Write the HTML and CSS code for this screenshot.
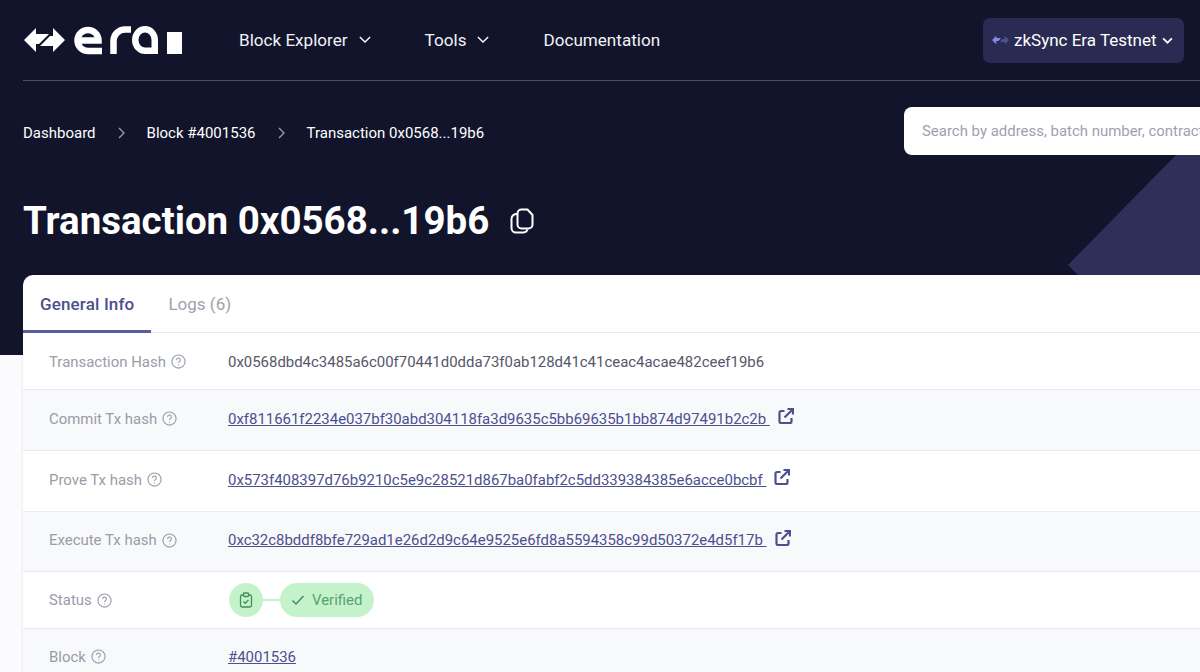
FILE: index.html
```html
<!DOCTYPE html>
<html lang="en">
<head>
<meta charset="utf-8">
<title>Transaction 0x0568...19b6</title>
<link rel="stylesheet" href="styles.css">
</head>
<body>
<div class="page">
  <header class="hero">
    <svg class="hero-shape" viewBox="0 0 132 120" aria-hidden="true"><polygon points="0,110 108,0 132,0 132,120 10,120"/></svg>
    <nav class="topbar">
      <svg class="logo" viewBox="23 25 160 30" role="img" aria-label="era logo">
        <path class="logo-fill" d="M24 40 36 28V34H49L39 44H36V52Z M65 40 53 52V46H40L50 36H53V28Z"/>
        <g class="logo-stroke">
          <path d="M77 40.500H98.500A10.500 10.500 0 1 0 88 51H102"/>
          <path d="M113.500 54V41A11.500 11.500 0 0 1 125 29.500H131"/>
          <path d="M154.750 54V40A9.750 10.750 0 1 0 145 50.750H155"/>
        </g>
        <rect class="logo-fill" x="167" y="32" width="15" height="22"/>
      </svg>
      <ul class="menu">
        <li class="menu-item">Block Explorer <svg class="chev" viewBox="0 0 14 8"><path d="M1 1l6 6 6-6"/></svg></li>
        <li class="menu-item">Tools <svg class="chev" viewBox="0 0 14 8"><path d="M1 1l6 6 6-6"/></svg></li>
        <li class="menu-item">Documentation</li>
      </ul>
      <div class="network">
        <svg class="net-logo" viewBox="0 0 18 10"><path class="net-a" d="M0 5 4.500 .5V3H9.500L7 6H4.500V9.500Z"/><path class="net-b" d="M18 5 13.500 9.500V7H8.500L11 4H13.500V.5Z"/></svg>
        <span>zkSync Era Testnet</span>
        <svg class="chev-bold" viewBox="0 0 12 8"><path d="M1 1.500l5 5 5-5"/></svg>
      </div>
    </nav>
    <div class="crumbrow">
      <ol class="crumbs">
        <li>Dashboard</li>
        <li class="sep"><svg viewBox="0 0 7 12"><path d="M1 1l5 5-5 5"/></svg></li>
        <li>Block #4001536</li>
        <li class="sep"><svg viewBox="0 0 7 12"><path d="M1 1l5 5-5 5"/></svg></li>
        <li>Transaction 0x0568...19b6</li>
      </ol>
      <div class="search">Search by address, batch number, contract</div>
    </div>
    <div class="titlerow">
      <h1>Transaction 0x0568...19b6</h1>
      <svg class="copy" viewBox="0 0 24 26"><path d="M11.500 1.500h6l5 5.500v9.500a4 4 0 0 1-4 4h-7a4 4 0 0 1-4-4v-11a4 4 0 0 1 4-4Z"/><path d="M7 6A5 5 0 0 0 1.500 10.500v9.500a4.500 4.500 0 0 0 4.500 4.500h7.500a4.500 4.500 0 0 0 4-3"/></svg>
    </div>
  </header>

  <main class="card">
    <div class="tabs">
      <div class="tab active">General Info</div>
      <div class="tab tab-logs">Logs (6)</div>
    </div>
    <div class="row row-hash">
      <div class="label">Transaction Hash<svg class="help" viewBox="0 0 16 16"><circle cx="8" cy="8" r="7"/><path d="M6 6.300a2 2 0 1 1 3.100 1.700C8.300 8.500 8 8.900 8 9.700"/><path d="M8 11.300v.9"/></svg></div>
      <div class="value">0x0568dbd4c3485a6c00f70441d0dda73f0ab128d41c41ceac4acae482ceef19b6</div>
    </div>
    <div class="row row-alt row-link">
      <div class="label">Commit Tx hash<svg class="help" viewBox="0 0 16 16"><circle cx="8" cy="8" r="7"/><path d="M6 6.300a2 2 0 1 1 3.100 1.700C8.300 8.500 8 8.900 8 9.700"/><path d="M8 11.300v.9"/></svg></div>
      <div class="value"><a class="link">0xf811661f2234e037bf30abd304118fa3d9635c5bb69635b1bb874d97491b2c2b&nbsp;</a><svg class="ext" viewBox="0 0 16 16"><path d="M6.500 3H3A1.500 1.500 0 0 0 1.500 4.500v9A1.500 1.500 0 0 0 3 15h9a1.500 1.500 0 0 0 1.500-1.500V10"/><path d="M6.500 9.500 15 1M9.500 1H15V6.500"/></svg></div>
    </div>
    <div class="row row-link">
      <div class="label">Prove Tx hash<svg class="help" viewBox="0 0 16 16"><circle cx="8" cy="8" r="7"/><path d="M6 6.300a2 2 0 1 1 3.100 1.700C8.300 8.500 8 8.900 8 9.700"/><path d="M8 11.300v.9"/></svg></div>
      <div class="value"><a class="link">0x573f408397d76b9210c5e9c28521d867ba0fabf2c5dd339384385e6acce0bcbf&nbsp;</a><svg class="ext" viewBox="0 0 16 16"><path d="M6.500 3H3A1.500 1.500 0 0 0 1.500 4.500v9A1.500 1.500 0 0 0 3 15h9a1.500 1.500 0 0 0 1.500-1.500V10"/><path d="M6.500 9.500 15 1M9.500 1H15V6.500"/></svg></div>
    </div>
    <div class="row row-alt row-link row-short">
      <div class="label">Execute Tx hash<svg class="help" viewBox="0 0 16 16"><circle cx="8" cy="8" r="7"/><path d="M6 6.300a2 2 0 1 1 3.100 1.700C8.300 8.500 8 8.900 8 9.700"/><path d="M8 11.300v.9"/></svg></div>
      <div class="value"><a class="link">0xc32c8bddf8bfe729ad1e26d2d9c64e9525e6fd8a5594358c99d50372e4d5f17b&nbsp;</a><svg class="ext" viewBox="0 0 16 16"><path d="M6.500 3H3A1.500 1.500 0 0 0 1.500 4.500v9A1.500 1.500 0 0 0 3 15h9a1.500 1.500 0 0 0 1.500-1.500V10"/><path d="M6.500 9.500 15 1M9.500 1H15V6.500"/></svg></div>
    </div>
    <div class="row">
      <div class="label">Status<svg class="help" viewBox="0 0 16 16"><circle cx="8" cy="8" r="7"/><path d="M6 6.300a2 2 0 1 1 3.100 1.700C8.300 8.500 8 8.900 8 9.700"/><path d="M8 11.300v.9"/></svg></div>
      <div class="value status">
        <span class="status-dot"><svg viewBox="0 0 16 16"><rect x="2.500" y="3" width="11" height="12" rx="1.800"/><rect x="5.500" y="1" width="5" height="3.500" rx=".8"/><path d="M5.500 9.500l1.800 1.800 3.200-3.400"/></svg></span>
        <span class="status-line"></span>
        <span class="status-pill"><svg viewBox="0 0 14 12"><path d="M1.500 6.500 5 10l7.500-8"/></svg>Verified</span>
      </div>
    </div>
    <div class="row row-alt row-last">
      <div class="label">Block<svg class="help" viewBox="0 0 16 16"><circle cx="8" cy="8" r="7"/><path d="M6 6.300a2 2 0 1 1 3.100 1.700C8.300 8.500 8 8.900 8 9.700"/><path d="M8 11.300v.9"/></svg></div>
      <div class="value"><a class="link">#4001536</a></div>
    </div>
  </main>
</div>
</body>
</html>
```
FILE: styles.css
```css
* { box-sizing: border-box; }
html, body { margin: 0; height: 100%; }
body { background: #fbfbfd; font-family: Roboto, "Liberation Sans", sans-serif; overflow: hidden; }
.page { width: 1200px; height: 672px; overflow: hidden; }

.hero { position: relative; height: 355px; background: #11142b; padding: 0 0 0 23px; color: #fff; overflow: hidden; }
.hero-shape { position: absolute; left: 1068px; top: 155px; width: 132px; height: 120px; }
.hero-shape polygon { fill: #2f3059; }

.topbar { display: flex; align-items: center; height: 81px; border-bottom: 1px solid #4c4e63; padding-right: 16px; }
.logo { width: 160px; height: 30px; flex: none; }
.logo-fill { fill: #fff; }
.logo-stroke path { fill: none; stroke: #fff; stroke-width: 6.500; }
.menu { display: flex; list-style: none; margin: 0 0 0 56px; padding: 0 0 1px; font-size: 17.100px; color: #f2f2f5; }
.menu-item { display: flex; align-items: center; margin-right: 54px; }
.chev { width: 12px; height: 7px; margin-left: 11px; }
.chev path { fill: none; stroke: #fff; stroke-width: 1.500; }
.network { display: flex; align-items: center; width: 201px; height: 45px; margin-left: auto; padding-left: 9px; border-radius: 7px; background: #2a2b52; font-size: 17px; }
.net-logo { width: 17px; height: 10px; margin-right: 5px; }
.net-a { fill: #8a84ec; }
.net-b { fill: #4f4f96; }
.chev-bold { width: 11px; height: 7px; margin-left: 5px; }
.chev-bold path { fill: none; stroke: #fff; stroke-width: 2; }

.crumbrow { display: flex; align-items: flex-start; justify-content: space-between; }
.crumbs { display: flex; align-items: center; list-style: none; margin: 41px 0 0; padding: 1px 0 0; font-size: 15px; line-height: 20px; color: #fff; }
.sep { display: flex; margin: 0 22px; }
.sep svg { width: 7px; height: 12px; }
.sep path { fill: none; stroke: #a4a5b2; stroke-width: 1.200; }
.search { flex: none; width: 296px; height: 48px; margin-top: 26px; padding-left: 18px; border-radius: 8px 0 0 8px; background: #fff; color: #9fa1ad; font-size: 14.950px; line-height: 49px; white-space: nowrap; overflow: hidden; }

.titlerow { display: flex; align-items: center; margin-top: 42px; }
h1 { margin: 0; font-size: 38.500px; line-height: 48px; font-weight: 700; color: #fff; }
.copy { width: 24px; height: 26px; margin-left: 21px; }
.copy path { fill: none; stroke: #fff; stroke-width: 2; }

.card { margin: -80px 0 0 23px; background: #fff; border-radius: 10px 0 0 0; box-shadow: 0 0 3px rgba(20, 24, 50, .12); position: relative; height: 400px; overflow: hidden; }
.tabs { display: flex; height: 58px; border-bottom: 1px solid #e9eaef; }
.tab { padding: 0 17px; font-size: 17px; line-height: 58px; color: #9fa1ad; }
.tab.active { height: 58px; padding-right: 17px; border-bottom: 3px solid #5b5c9d; font-weight: 500; letter-spacing: .15px; color: #4d4f8e; }
.tab-logs { padding-left: 17px; }

.row { display: flex; align-items: center; height: 57px; border-bottom: 1px solid #e9eaef; padding-left: 26px; font-size: 14.950px; }
.row-hash { padding-top: 1px; }
.row-link { height: 61px; padding-bottom: 3px; }
.row-short { height: 60px; }
.row-alt { background: #f8f9fb; }
.row-last { border-bottom: 0; padding-bottom: 2px; }
.label { display: flex; align-items: center; width: 179px; flex: none; color: #9a9ca8; }
.help { width: 15px; height: 15px; margin-left: 5px; }
.help circle, .help path { fill: none; stroke: #9a9ca8; stroke-width: 1.200; }
.value { display: flex; align-items: center; color: #55576a; white-space: nowrap; }
.link { color: #4d4f8e; text-decoration: underline; }
.ext { width: 16px; height: 16px; margin: -5px 0 0 8px; }
.ext path { fill: none; stroke: #4d4f8e; stroke-width: 2.200; }

.status-dot { display: flex; align-items: center; justify-content: center; width: 34px; height: 34px; margin-left: 1px; border-radius: 50%; background: #c4f3cb; }
.status-dot svg { width: 16px; height: 16px; }
.status-dot rect { fill: #c4f3cb; stroke: #3f8f5b; stroke-width: 1.300; }
.status-dot path { fill: none; stroke: #3f8f5b; stroke-width: 1.300; }
.status-line { width: 17px; height: 2px; background: #c4f3cb; }
.status-pill { display: flex; align-items: center; height: 34px; padding: 0 12px 0 11px; border-radius: 17px; background: #c4f3cb; color: #58a172; }
.status-pill svg { width: 14px; height: 12px; margin-right: 7px; }
.status-pill path { fill: none; stroke: #3f8f5b; stroke-width: 1.500; }
```
